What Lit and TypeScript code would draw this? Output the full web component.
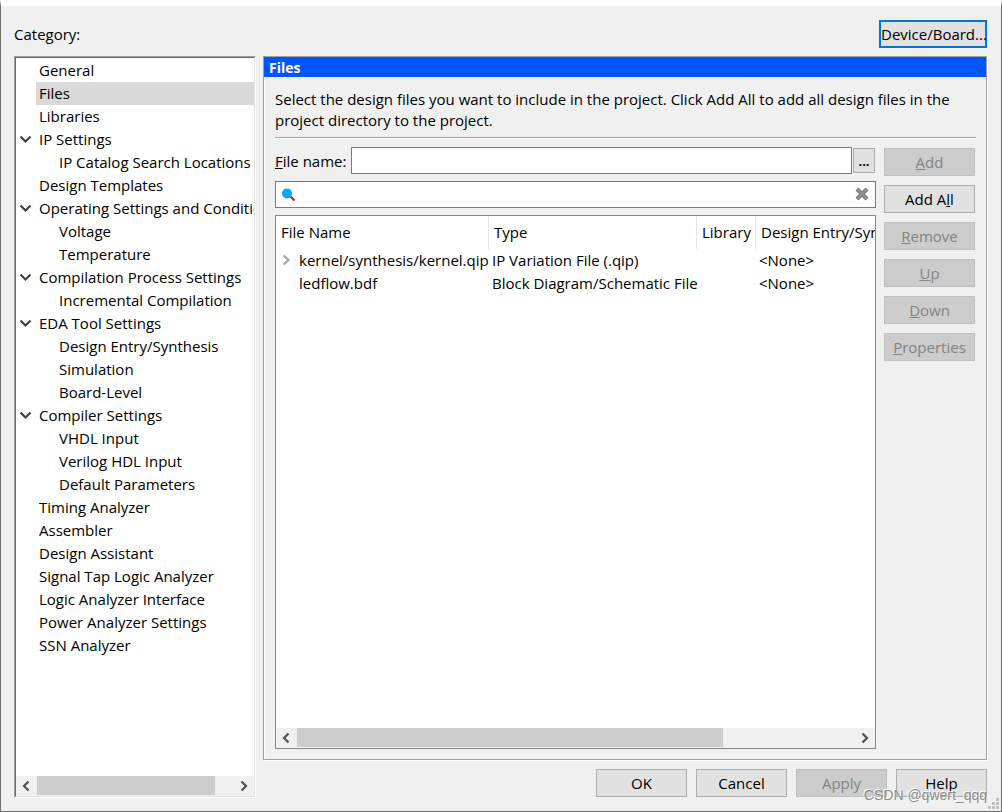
import { LitElement, html, css, svg, nothing } from "lit";
import { customElement, state } from "lit/decorators.js";
import { classMap } from "lit/directives/class-map.js";

interface Category {
  name: string;
  children?: string[];
}

interface ProjectFile {
  name: string;
  type: string;
  tool: string;
  expandable: boolean;
}

const CATEGORIES: Category[] = [
  { name: "General" },
  { name: "Files" },
  { name: "Libraries" },
  { name: "IP Settings", children: ["IP Catalog Search Locations"] },
  { name: "Design Templates" },
  { name: "Operating Settings and Conditions", children: ["Voltage", "Temperature"] },
  { name: "Compilation Process Settings", children: ["Incremental Compilation"] },
  { name: "EDA Tool Settings", children: ["Design Entry/Synthesis", "Simulation", "Board-Level"] },
  { name: "Compiler Settings", children: ["VHDL Input", "Verilog HDL Input", "Default Parameters"] },
  { name: "Timing Analyzer" },
  { name: "Assembler" },
  { name: "Design Assistant" },
  { name: "Signal Tap Logic Analyzer" },
  { name: "Logic Analyzer Interface" },
  { name: "Power Analyzer Settings" },
  { name: "SSN Analyzer" },
];

const FILES: ProjectFile[] = [
  { name: "kernel/synthesis/kernel.qip", type: "IP Variation File (.qip)", tool: "<None>", expandable: true },
  { name: "ledflow.bdf", type: "Block Diagram/Schematic File", tool: "<None>", expandable: false },
];

const chevron = (d: string, color: string) => html`
  <svg width="12" height="12" viewBox="0 0 12 12" aria-hidden="true">
    ${svg`<path d=${d} fill="none" stroke=${color} stroke-width="2.2" />`}
  </svg>
`;
const DOWN = "M0.5 2.5 L5.5 7.5 L10.5 2.5";
const LEFT = "M7.5 1.5 L3 6 L7.5 10.5";
const RIGHT = "M3.5 1.5 L8 6 L3.5 10.5";
const EXPAND = "M4.5 0.5 L9.5 5 L4.5 9.5";

@customElement("scroll-strip")
export class ScrollStrip extends LitElement {
  static properties = { ratio: { type: Number } };
  declare ratio: number;

  static styles = css`
    :host {
      display: flex;
      height: 20px;
      background: #f0f0f0;
    }
    .arrow {
      width: 21px;
      padding: 0;
      border: 0;
      background: none;
      display: grid;
      place-items: center;
    }
    .track {
      flex: 1;
      padding-bottom: 1px;
      display: flex;
    }
    .thumb {
      background: #cdcdcd;
    }
  `;

  render() {
    return html`
      <button class="arrow" aria-label="Scroll left">${chevron(LEFT, "#505050")}</button>
      <div class="track"><div class="thumb" style="width:${this.ratio}%"></div></div>
      <button class="arrow" aria-label="Scroll right">${chevron(RIGHT, "#505050")}</button>
    `;
  }
}

@customElement("app-root")
export class AppRoot extends LitElement {
  @state() private selected = "Files";
  @state() private collapsed: string[] = [];

  static styles = css`
    :host {
      display: block;
      font: 15px/23px "Open Sans", "Noto Sans", sans-serif;
      color: #000;
    }
    * {
      box-sizing: border-box;
    }
    button,
    input {
      font: inherit;
      color: inherit;
    }
    .dialog {
      position: relative;
      min-height: 100vh;
      display: flex;
      flex-direction: column;
      gap: 8px;
      padding: 14px 14px 13px 13px;
      background: #f0f0f0;
      border: 1px solid #6e6e6e;
      border-top: 6px solid #fff;
    }
    .top {
      display: flex;
      align-items: center;
      justify-content: space-between;
    }
    .btn {
      height: 28px;
      width: 91px;
      padding: 0;
      line-height: 24px;
      text-align: center;
      white-space: nowrap;
      background: #e1e1e1;
      border: 1px solid #adadad;
    }
    .btn:disabled {
      color: #838383;
      background: #ccc;
      border-color: #bfbfbf;
    }
    .btn.device {
      width: 108px;
      border: 2px solid #0078d7;
    }
    .body {
      flex: 1;
      display: grid;
      grid-template-columns: 242px minmax(0, 1fr);
      column-gap: 7px;
    }
    .tree {
      display: flex;
      flex-direction: column;
      min-width: 0;
      background: #fff;
      border: 1px solid;
      border-color: #a0a0a0 #fff #fff #a0a0a0;
    }
    .tree-inner {
      flex: 1;
      display: flex;
      flex-direction: column;
      min-width: 0;
      border: 1px solid;
      border-color: #696969 #e3e3e3 #e3e3e3 #696969;
    }
    .list {
      flex: 1;
      margin: 0;
      padding: 1px 0 0;
      list-style: none;
      overflow: hidden;
    }
    .node {
      display: grid;
      grid-template-columns: 20px minmax(0, 1fr);
      height: 23px;
    }
    .toggle {
      padding: 0;
      border: 0;
      background: none;
      display: grid;
      place-items: center;
    }
    .label {
      grid-column: 2;
      padding: 0 0 0 3px;
      border: 0;
      background: none;
      text-align: left;
      white-space: nowrap;
      overflow: hidden;
    }
    .label.child {
      padding-left: 23px;
    }
    .label.selected {
      background: #d9d9d9;
    }
    .right {
      display: flex;
      flex-direction: column;
      gap: 9px;
      min-width: 0;
      padding-bottom: 1px;
    }
    .panel {
      flex: 1;
      display: flex;
      flex-direction: column;
      border: 1px solid #a0a0a0;
      box-shadow: 1px 1px 0 #fff, inset 1px 1px 0 #fff;
    }
    .title {
      margin: 0;
      padding: 1px 0 0 5px;
      font-size: 14px;
      line-height: 19px;
      font-weight: 700;
      color: #fff;
      background: #0055ff;
    }
    .content {
      flex: 1;
      display: flex;
      flex-direction: column;
      padding: 12px 10px 10px 11px;
    }
    .about {
      margin: 0 0 6px;
      line-height: 21px;
    }
    .rule {
      width: 100%;
      margin: 0 0 8px;
      border: 0;
      border-top: 1px solid #a0a0a0;
      border-bottom: 1px solid #fff;
    }
    .work {
      flex: 1;
      display: grid;
      grid-template-columns: minmax(0, 1fr) 91px;
      column-gap: 8px;
      padding-right: 1px;
    }
    .files {
      display: flex;
      flex-direction: column;
      gap: 7px;
      min-width: 0;
    }
    .name-row {
      display: flex;
      align-items: center;
    }
    .name-row label {
      width: 76px;
      padding-top: 2px;
      white-space: nowrap;
    }
    .field {
      flex: 1;
      min-width: 0;
      height: 27px;
      border: 1px solid #7a7a7a;
      background: #fff;
      padding: 0 5px;
    }
    .btn.browse {
      width: 22px;
      height: 25px;
      margin: 0 1px;
      font-size: 13px;
      font-weight: 700;
    }
    .search {
      display: flex;
      align-items: center;
      height: 27px;
      padding: 0 6px 0 5px;
      background: #fff;
      border: 1px solid #7a7a7a;
    }
    .search input {
      flex: 1;
      min-width: 0;
      border: 0;
      padding: 0 5px;
      background: none;
      outline: none;
    }
    .clear {
      padding: 0;
      border: 0;
      background: none;
      display: grid;
    }
    .grid {
      flex: 1;
      display: flex;
      flex-direction: column;
      background: #fff;
      border: 1px solid #828790;
    }
    .view {
      flex: 1;
      overflow: hidden;
    }
    table {
      width: 800px;
      table-layout: fixed;
      border-collapse: separate;
      border-spacing: 0;
    }
    th,
    td {
      padding: 0 0 0 3px;
      text-align: left;
      font-weight: 400;
      white-space: nowrap;
      height: 23px;
    }
    th {
      height: 33px;
      padding-left: 5px;
      border-right: 1px solid #e5e5e5;
    }
    .c-name {
      width: 213px;
    }
    .c-type {
      width: 208px;
    }
    .c-lib {
      width: 59px;
    }
    .file {
      display: grid;
      grid-template-columns: 14px auto;
      column-gap: 6px;
      align-items: center;
      justify-content: start;
    }
    .file span {
      grid-column: 2;
    }
    .actions {
      display: flex;
      flex-direction: column;
      gap: 9px;
      padding-top: 1px;
    }
    .footer {
      display: flex;
      justify-content: flex-end;
      gap: 9px;
    }
    .grip {
      position: absolute;
      right: 2px;
      bottom: 2px;
    }
    .watermark {
      position: absolute;
      right: 14px;
      bottom: 7px;
      font: 14px/18px "Liberation Sans", sans-serif;
      color: #8c8c8c;
      text-shadow: -1px -1px 0 #fff;
    }
  `;

  private toggle(name: string) {
    this.collapsed = this.collapsed.includes(name)
      ? this.collapsed.filter((n) => n !== name)
      : [...this.collapsed, name];
  }

  private node(name: string, child: boolean, parent: boolean) {
    const selected = this.selected === name;
    return html`
      <li class="node">
        ${parent
          ? html`<button class="toggle" aria-label="Toggle ${name}" @click=${() => this.toggle(name)}>
              ${chevron(this.collapsed.includes(name) ? RIGHT : DOWN, "#404040")}
            </button>`
          : nothing}
        <button class=${classMap({ label: true, child, selected })} @click=${() => (this.selected = name)}>${name}</button>
      </li>
    `;
  }

  render() {
    return html`
      <main class="dialog">
        <div class="top">
          <span>Category:</span>
          <button class="btn device">Device/Board...</button>
        </div>
        <div class="body">
          <nav class="tree" aria-label="Category">
            <div class="tree-inner">
              <ul class="list">
                ${CATEGORIES.map((c) => [
                  this.node(c.name, false, !!c.children),
                  this.collapsed.includes(c.name) ? nothing : (c.children ?? []).map((n) => this.node(n, true, false)),
                ])}
              </ul>
              <scroll-strip .ratio=${91}></scroll-strip>
            </div>
          </nav>
          <div class="right">
            <section class="panel">
              <h1 class="title">Files</h1>
              <div class="content">
                <p class="about">
                  Select the design files you want to include in the project. Click Add All to add all design files in
                  the project directory to the project.
                </p>
                <hr class="rule" />
                <div class="work">
                  <div class="files">
                    <div class="name-row">
                      <label for="file-name"><u>F</u>ile name:</label>
                      <input id="file-name" class="field" type="text" />
                      <button class="btn browse" aria-label="Browse">...</button>
                    </div>
                    <div class="search">
                      <svg width="16" height="16" viewBox="0 0 16 16" aria-hidden="true">
                        <path d="M9.5 9.5 L13.5 13.5" stroke="#b71c1c" stroke-width="2" />
                        <circle cx="6" cy="6.5" r="5" fill="#03a9f4" />
                      </svg>
                      <input type="text" aria-label="Filter files" />
                      <button class="clear" aria-label="Clear filter">
                        <svg width="14" height="14" viewBox="0 0 14 14">
                          <path d="M2 1 L12 11 M12 1 L2 11" stroke="#777" stroke-width="4" />
                          <path d="M2 1 L12 11 M12 1 L2 11" stroke="#929292" stroke-width="2" />
                        </svg>
                      </button>
                    </div>
                    <div class="grid">
                      <div class="view">
                        <table>
                          <thead>
                            <tr>
                              <th class="c-name">File Name</th>
                              <th class="c-type">Type</th>
                              <th class="c-lib">Library</th>
                              <th>Design Entry/Synthesis Tool</th>
                            </tr>
                          </thead>
                          <tbody>
                            ${FILES.map(
                              (f) => html`<tr>
                                <td>
                                  <div class="file">
                                    ${f.expandable ? chevron(EXPAND, "#a6a6a6") : nothing}<span>${f.name}</span>
                                  </div>
                                </td>
                                <td>${f.type}</td>
                                <td></td>
                                <td>${f.tool}</td>
                              </tr>`
                            )}
                          </tbody>
                        </table>
                      </div>
                      <scroll-strip .ratio=${76.4}></scroll-strip>
                    </div>
                  </div>
                  <div class="actions">
                    <button class="btn" disabled><u>A</u>dd</button>
                    <button class="btn">Add A<u>l</u>l</button>
                    <button class="btn" disabled><u>R</u>emove</button>
                    <button class="btn" disabled><u>U</u>p</button>
                    <button class="btn" disabled><u>D</u>own</button>
                    <button class="btn" disabled><u>P</u>roperties</button>
                  </div>
                </div>
              </div>
            </section>
            <div class="footer">
              <button class="btn">OK</button>
              <button class="btn">Cancel</button>
              <button class="btn" disabled>Apply</button>
              <button class="btn">Help</button>
            </div>
          </div>
        </div>
        <svg class="grip" width="11" height="11" viewBox="0 0 11 11" aria-hidden="true">
          <path
            d="M8 0h3v3h-3z M4 4h3v3h-3z M8 4h3v3h-3z M0 8h3v3h-3z M4 8h3v3h-3z M8 8h3v3h-3z"
            fill="#bfbfbf"
          />
        </svg>
        <span class="watermark">CSDN @qwert_qqq</span>
      </main>
    `;
  }
}
